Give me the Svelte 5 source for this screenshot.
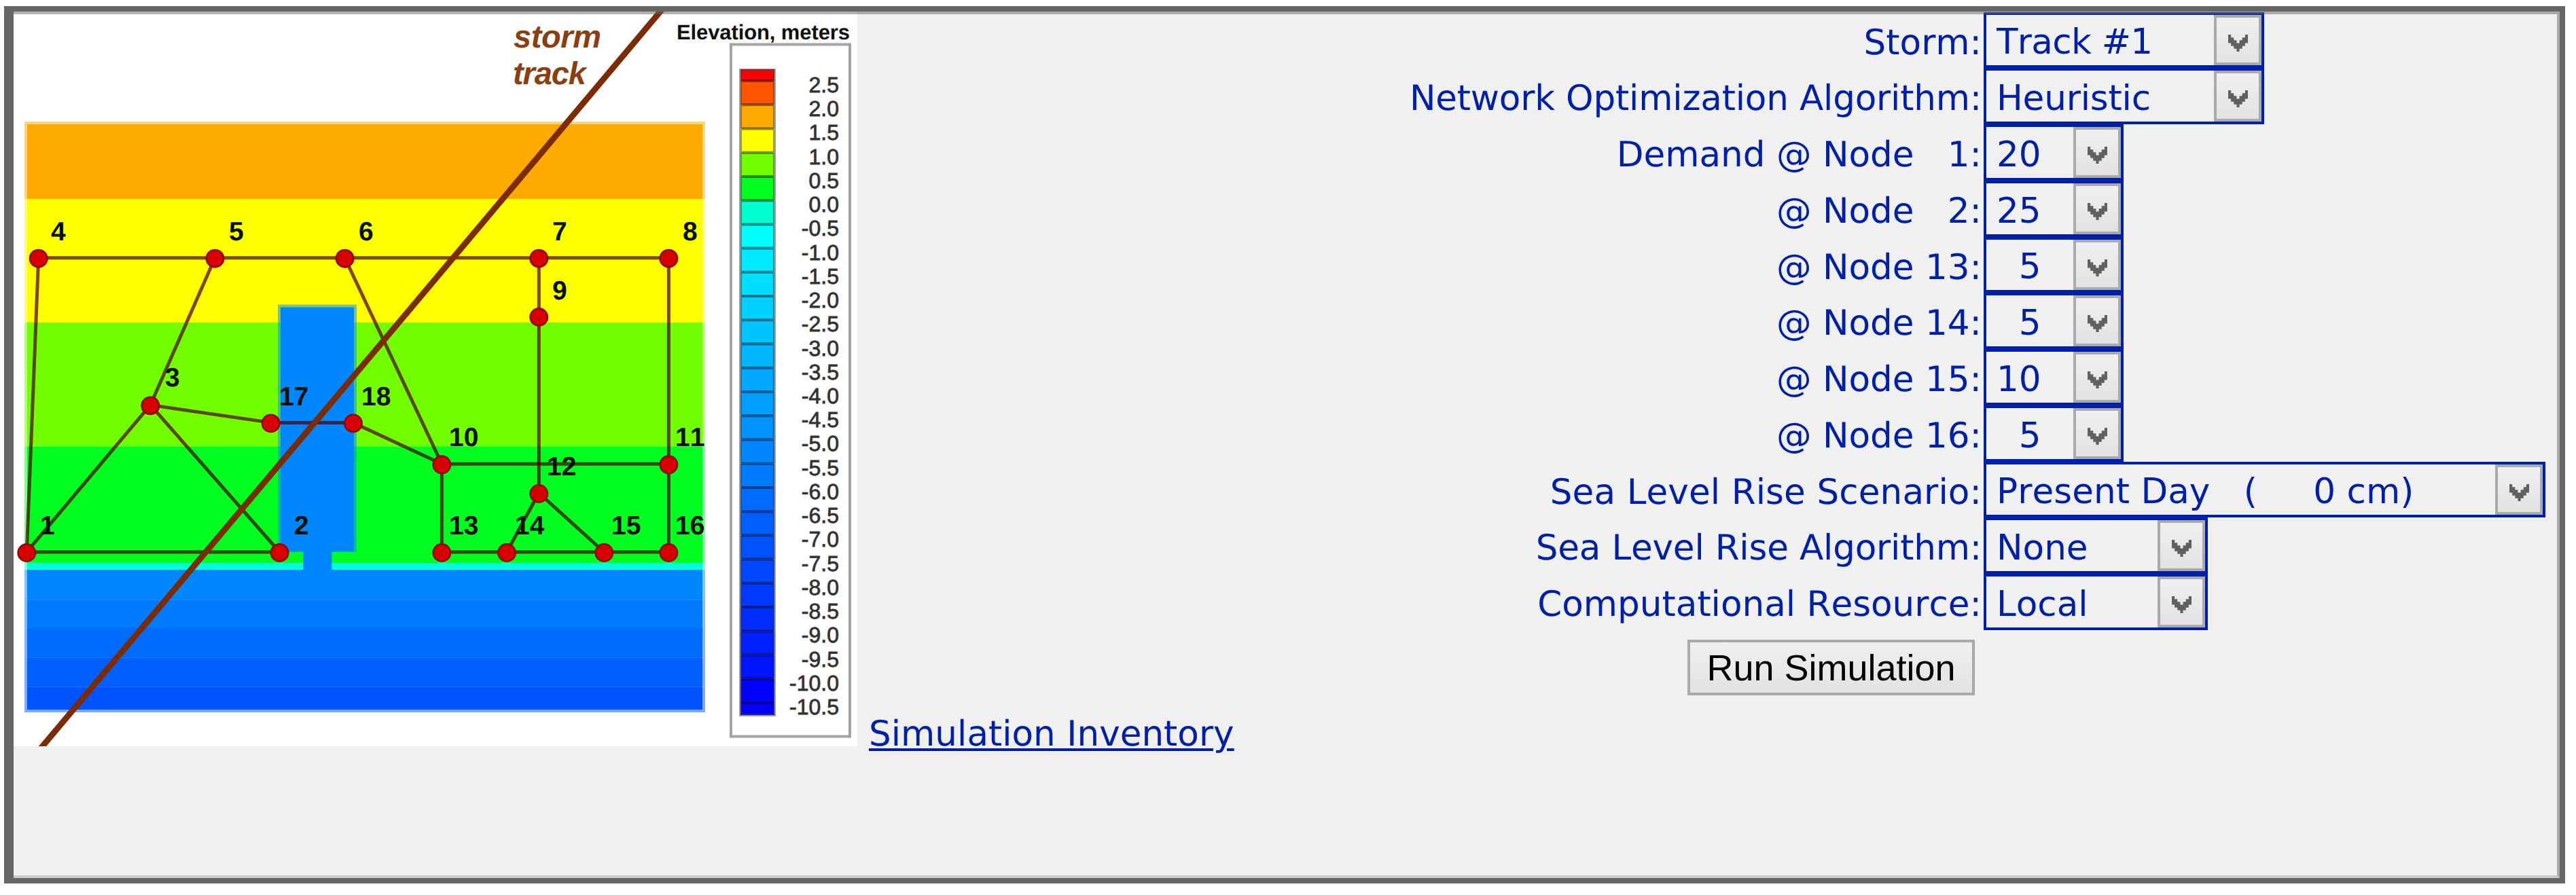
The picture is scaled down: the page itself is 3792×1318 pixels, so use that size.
<script lang="ts">
    type Point = [number, number]
    type Field = { label: string, value: string, width: number, spacing?: number, valueSpacing?: number }

    const fields: Field[] = [
        { label: 'Storm:', value: 'Track #1', width: 413, valueSpacing: -0.7 },
        { label: 'Network Optimization Algorithm:', value: 'Heuristic', width: 413, spacing: -0.2, valueSpacing: -0.2 },
        { label: 'Demand @ Node \u00a0 1:', value: '20', width: 206 },
        { label: '@ Node \u00a0 2:', value: '25', width: 206 },
        { label: '@ Node 13:', value: '\u00a0 5', width: 206 },
        { label: '@ Node 14:', value: '\u00a0 5', width: 206 },
        { label: '@ Node 15:', value: '10', width: 206 },
        { label: '@ Node 16:', value: '\u00a0 5', width: 206 },
        { label: 'Sea Level Rise Scenario:', value: 'Present Day \u00a0 (\u00a0 \u00a0 \u00a00 cm)', width: 827, spacing: 0.1, valueSpacing: 0.05 },
        { label: 'Sea Level Rise Algorithm:', value: 'None', width: 330, spacing: -0.2 },
        { label: 'Computational Resource:', value: 'Local', width: 330 },
    ]

    const nodes: Record<number, Point> = {
        1: [39.3, 814], 2: [411.6, 814], 3: [221.4, 597.4], 4: [56.7, 380.7],
        5: [316.5, 380.7], 6: [507.6, 380.7], 7: [793.3, 380.7], 8: [984.4, 380.7],
        9: [793.3, 467], 10: [650.4, 684.3], 11: [984.4, 684.3], 12: [793.3, 727],
        13: [650.4, 814], 14: [746, 814], 15: [889.3, 814], 16: [984.4, 814],
        17: [398.7, 623.4], 18: [520, 623.4],
    }

    const edges = [
        [4, 5], [5, 6], [6, 7], [7, 8], [4, 1], [5, 3], [3, 1], [3, 2], [1, 2],
        [3, 17], [17, 18], [18, 10], [6, 10], [10, 11], [10, 13], [13, 14],
        [14, 15], [15, 16], [7, 9], [9, 12], [12, 14], [12, 15], [8, 11], [11, 16],
    ]

    const labels: [number, number, number][] = [
        [4, 75, 354], [5, 337, 354], [6, 528, 354], [7, 813, 354], [8, 1005, 354],
        [9, 813, 441], [3, 243, 569], [17, 411, 597], [18, 532, 597], [10, 661, 657],
        [11, 994, 657], [12, 805, 700], [1, 59, 787], [2, 433, 787], [13, 661, 787],
        [14, 758, 787], [15, 900, 787], [16, 994, 787],
    ]

    // top y, bottom y, colour
    const land: [number, number, string][] = [
        [183, 293, '#ffaa00'],
        [293, 475, '#ffff00'],
        [475, 657.5, '#72ff00'],
        [657.5, 829.5, '#00ff20'],
        [829.5, 839, '#00ffda'],
        [839, 883.3, '#0086ff'],
        [883.3, 925, '#007aff'],
        [925, 968.6, '#006cff'],
        [968.6, 1011.5, '#0060ff'],
        [1011.5, 1045, '#0054ff'],
    ]

    const scale = [
        '#ff0000', '#ff5500', '#ffaa00', '#ffff00', '#72ff00', '#00ff20', '#00ffd0',
        '#00ffff', '#00eaff', '#00deff', '#00d0ff', '#00c4ff', '#00b6ff', '#00a9ff',
        '#009eff', '#0092ff', '#0086ff', '#007aff', '#006cff', '#0060ff', '#0052ff',
        '#0046ff', '#0038ff', '#002cff', '#0020ff', '#0014ff', '#0000ff', '#0000ff',
    ]
    const step = 35.23
    const tick = (i: number) => 119 + i * step
    const cellTop = (i: number) => i === 0 ? 102 : tick(i - 1)
    const cellBottom = (i: number) => i === scale.length - 1 ? 1053 : tick(i)
</script>

<main>
    <svg class="map" viewBox="20 17 1242 1082">
        <rect x="20" y="17" width="1242" height="1082" fill="#fff" />

        {#each land as [top, bottom, fill]}
            <rect class="fringe" x="36" y={top} width="1002" height={bottom - top} {fill} />
            <rect x="40" y={top} width="994" height={bottom - top} {fill} />
        {/each}
        <rect class="fringe" x="36" y="179" width="1002" height="4" fill="#ffaa00" />
        <rect class="fringe" x="36" y="1045" width="1002" height="4" fill="#0054ff" />
        <rect class="fringe" x="409" y="448.5" width="116" height="364" fill="#0086ff" />
        <rect x="413" y="452.5" width="108" height="360" fill="#0086ff" />
        <rect x="446.4" y="812" width="42" height="30" fill="#0086ff" />

        <g class="edges">
            {#each edges as [a, b]}
                <line x1={nodes[a][0]} y1={nodes[a][1] - 1} x2={nodes[b][0]} y2={nodes[b][1] - 1} />
            {/each}
        </g>
        {#each labels as [n, x, y]}
            <text class="node" {x} {y}>{n}</text>
        {/each}
        {#each Object.values(nodes) as [cx, cy]}
            <circle {cx} {cy} r="12.7" />
        {/each}

        <line class="track" x1="980.4" y1="7" x2="54.1" y2="1109" />
        <text class="storm" x="756" y="70" textLength="129">storm</text>
        <text class="storm" x="755" y="123.5" textLength="108">track</text>

        <text class="title" x="996" y="58" textLength="255">Elevation, meters</text>
        <rect class="legend" x="1076" y="65.5" width="175" height="1019" />
        {#each scale as fill, i}
            <rect x="1090" y={cellTop(i)} width="50" height={cellBottom(i) - cellTop(i)} {fill} />
        {/each}
        {#each scale.slice(1) as _, i}
            <line class="tick" x1="1092" y1={tick(i)} x2="1138" y2={tick(i)} />
            <text class="level" x="1235" y={tick(i) + 17}>{(2.5 - i * 0.5).toFixed(1)}</text>
        {/each}
        <rect class="bar" x="1090" y="103" width="50" height="950" />
    </svg>

    <a href="#inventory">Simulation Inventory</a>

    <form onsubmit={(e) => e.preventDefault()}>
        {#each fields as field, i}
            <label for="field{i}" style={`letter-spacing: ${field.spacing ?? 0}px`}>{field.label}</label>
            <div class="field" style={`width: ${field.width}px`}>
                <select id="field{i}" style={`letter-spacing: ${field.valueSpacing ?? 0}px`}>
                    <option>{field.value}</option>
                </select>
                <span class="arrow">
                    <svg viewBox="0 0 7 6" preserveAspectRatio="none">
                        <path d="M0 0h1v1h1v1h1v1h1v-1h1v-1h1v-1h1v3h-1v1h-1v1h-1v1h-1v-1h-1v-1h-1v-1h-1z" />
                    </svg>
                </span>
            </div>
        {/each}
        <button>Run Simulation</button>
    </form>
</main>

<style>
    :global(body) {
        background: #fff;
    }

    main {
        position: relative;
        display: flex;
        box-sizing: border-box;
        width: 3770px;
        height: 1292px;
        margin: 9px 0 0 6px;
        border: solid #666;
        border-width: 8px 8px 8px 14px;
        background: #f0f0f0;
        color: #0020a8;
        font-family: Verdana, "DejaVu Sans", sans-serif;
        font-size: 51.6px;
        font-kerning: none;
        text-rendering: geometricPrecision;
    }

    /* faint inner bevel, drawn over the map and the first select */
    main::after {
        content: '';
        position: absolute;
        inset: 0;
        border: solid rgba(102, 102, 102, 0.5);
        border-width: 4.5px 4px 4.5px 0;
        border-bottom-color: rgba(102, 102, 102, 0.27);
        pointer-events: none;
    }

    .map {
        flex: none;
        width: 1242px;
        height: 1082px;
        font-family: Arial, "Liberation Sans", sans-serif;
    }

    .fringe {
        opacity: 0.5;
    }

    .edges line {
        stroke: #500000;
        stroke-opacity: 0.72;
        stroke-width: 5;
    }

    circle {
        fill: #d60000;
        stroke: #8c0800;
        stroke-width: 2.5;
    }

    .node {
        font-size: 39px;
        font-weight: bold;
        fill: #041004;
    }

    .track {
        stroke: #7c2c04;
        stroke-width: 8.8;
    }

    .storm {
        font-size: 47px;
        font-weight: bold;
        font-style: italic;
        fill: #8a3f10;
    }

    .title {
        font-size: 31px;
        font-weight: bold;
        fill: #111;
    }

    .level {
        font-size: 32px;
        text-anchor: end;
        fill: #333;
        stroke: #333;
        stroke-width: 0.8;
    }

    .legend {
        fill: #fff;
        stroke: #a4a4a4;
        stroke-width: 4;
    }

    .tick {
        stroke: #000;
        stroke-opacity: 0.45;
        stroke-width: 4;
    }

    .bar {
        fill: none;
        stroke: #404040;
        stroke-opacity: 0.5;
        stroke-width: 4;
    }

    a {
        margin: 1034px 0 0 17px;
        height: 60px;
        line-height: 60px;
        color: inherit;
        white-space: nowrap;
        text-decoration-thickness: 4px;
        text-underline-offset: 4px;
    }

    form {
        display: grid;
        grid-template-columns: auto 848px;
        grid-template-rows: repeat(11, 82.76px);
        align-content: start;
        margin-left: auto;
        padding-top: 0.6px;
    }

    label {
        padding: 4px 3px 0 0;
        line-height: 82.76px;
        height: 78px;
        text-align: right;
        white-space: nowrap;
    }

    .field {
        display: flex;
        box-sizing: border-box;
        height: 82.76px;
        border: 4px solid #0020a8;
    }

    select {
        appearance: none;
        flex: 1;
        min-width: 0;
        margin: 0;
        padding: 5px 0 0 15px;
        border: 0;
        outline: 0;
        border-radius: 0;
        background: none;
        color: inherit;
        font: inherit;
        font-kerning: none;
    }

    .arrow {
        display: flex;
        flex: none;
        box-sizing: border-box;
        width: 70px;
        padding: 25px 0 0 17px;
        border: 4px solid #aaa;
        background: linear-gradient(#f0f0f0, #e2e2e2);
    }

    .arrow svg {
        width: 29px;
        height: 25px;
        fill: #606060;
    }

    button {
        justify-self: end;
        box-sizing: border-box;
        width: 423px;
        height: 82px;
        margin: 14px 13px 0 0;
        padding: 0;
        border: 4px solid #aaa;
        border-radius: 0;
        background: linear-gradient(#f0f0f0, #e2e2e2);
        color: #000;
        font: 54px Arial, "Liberation Sans", sans-serif;
    }
</style>
